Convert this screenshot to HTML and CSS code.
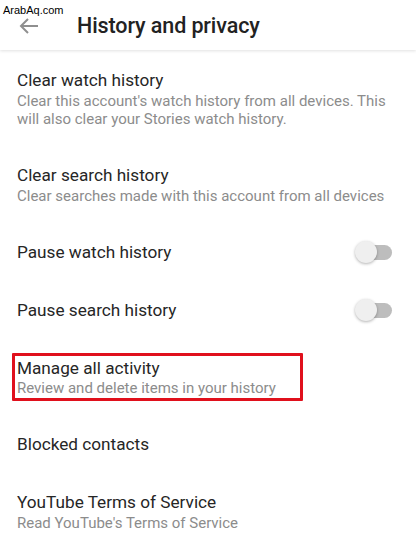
FILE: index.html
```html
<!DOCTYPE html>
<html>
<head>
<meta charset="utf-8">
<link rel="stylesheet" href="styles.css">
</head>
<body>
<div class="watermark">ArabAq.com</div>
<header class="appbar">
  <svg class="back" width="20" height="16" viewBox="0 0 20 16" aria-hidden="true">
    <path d="M2 8H19" stroke="#8f8f8f" stroke-width="2" fill="none"/>
    <path d="M9 1L2 8L9 15" stroke="#8f8f8f" stroke-width="2" fill="none"/>
  </svg>
  <h1 class="title">History and privacy</h1>
</header>
<main class="list">
  <div class="row">
    <div class="text">
      <div class="primary">Clear watch history</div>
      <div class="secondary">Clear this account's watch history from all devices. This will also clear your Stories watch history.</div>
    </div>
  </div>
  <div class="row">
    <div class="text">
      <div class="primary">Clear search history</div>
      <div class="secondary">Clear searches made with this account from all devices</div>
    </div>
  </div>
  <div class="row">
    <div class="text">
      <div class="primary">Pause watch history</div>
    </div>
    <div class="switch"><span class="thumb"></span></div>
  </div>
  <div class="row">
    <div class="text">
      <div class="primary">Pause search history</div>
    </div>
    <div class="switch"><span class="thumb"></span></div>
  </div>
  <div class="row">
    <div class="text highlighted">
      <div class="primary">Manage all activity</div>
      <div class="secondary tight">Review and delete items in your history</div>
      <span class="redbox"></span>
    </div>
  </div>
  <div class="row">
    <div class="text">
      <div class="primary">Blocked contacts</div>
    </div>
  </div>
  <div class="row">
    <div class="text">
      <div class="primary">YouTube Terms of Service</div>
      <div class="secondary">Read YouTube's Terms of Service</div>
    </div>
  </div>
</main>
</body>
</html>
```
FILE: styles.css
```css
* { box-sizing: border-box; }
html, body { margin: 0; padding: 0; background: #fff; }
body {
  font-family: Roboto, "Noto Sans", sans-serif;
  width: 416px;
  height: 555px;
  overflow: hidden;
  position: relative;
}
.watermark {
  position: absolute;
  left: 3px;
  top: 4px;
  font-family: "Liberation Sans", Arial, sans-serif;
  font-size: 11px;
  line-height: 13px;
  color: #000;
  z-index: 5;
}
.appbar {
  height: 50px;
  display: flex;
  align-items: center;
  background: #fff;
  box-shadow: 0 1px 3px rgba(0,0,0,0.12);
  position: relative;
  z-index: 2;
}
.back {
  margin-left: 19px;
  margin-top: 1px;
  flex: none;
}
.title {
  margin: 1px 0 0 38px;
  font-size: 21.5px;
  font-weight: 500;
  color: #222;
  line-height: 26px;
  letter-spacing: -0.1px;
}
.list {
  padding-top: 1px;
}
.row {
  display: flex;
  align-items: center;
  padding: 18px 24px 18px 17px;
}
.text {
  flex: 1;
  position: relative;
}
.primary {
  font-size: 17.2px;
  line-height: 22px;
  color: #262626;
}
.secondary {
  margin-top: 1px;
  font-size: 15px;
  line-height: 18px;
  color: #8c8c8c;
}
.secondary.tight { margin-top: 0; }
.redbox {
  position: absolute;
  left: -5px;
  top: -4px;
  width: 291px;
  height: 48px;
  border: 3px solid #e0101c;
  border-radius: 1px;
}
.switch {
  position: relative;
  width: 34px;
  height: 15px;
  border-radius: 8px;
  background: #bdbdbd;
  flex: none;
}
.thumb {
  position: absolute;
  left: -3px;
  top: -4px;
  width: 22px;
  height: 22px;
  border-radius: 50%;
  background: #efefef;
  box-shadow: 0 1px 3px rgba(0,0,0,0.3);
}
```
